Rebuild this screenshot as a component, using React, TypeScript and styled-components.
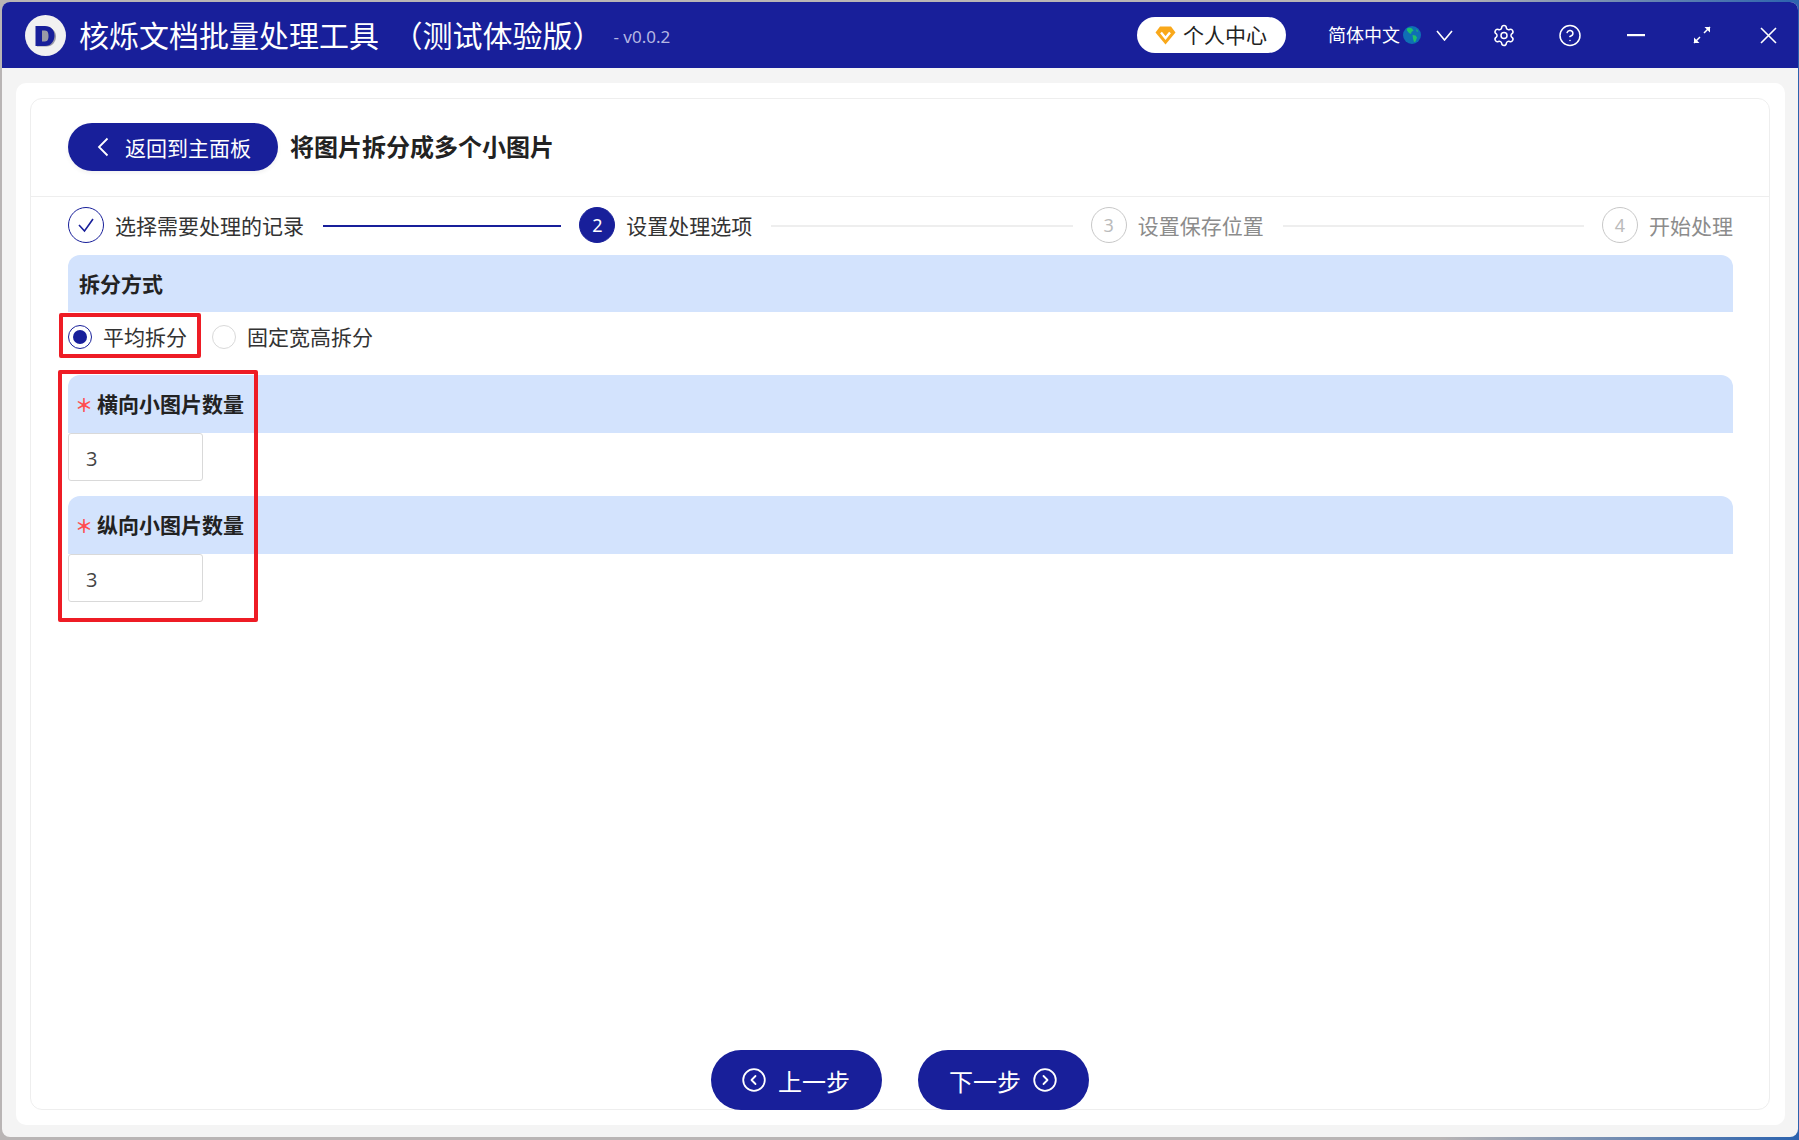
import React from "react";
import styled, { createGlobalStyle } from "styled-components";
import { Settings, CircleHelp } from "lucide-react";

const NAVY = "#181f9a";
const BAND = "#d3e3fd";
const RED = "#ee1c25";
const FONT = `"Noto Sans CJK SC", "Noto Sans", sans-serif`;

const Global = createGlobalStyle`
  html, body { margin: 0; padding: 0; height: 100%; overflow: hidden; }
  body {
    font-family: ${FONT};
    background: linear-gradient(90deg, #b9b5b5 0%, #b9b5b5 80%, #2c63ae 100%);
  }
  * { box-sizing: border-box; }
`;

const Window = styled.div`
  margin: 2px 1px 0 2px;
  height: 1135px;
  display: flex;
  flex-direction: column;
  background: #f4f4f4;
  border-radius: 8px;
  overflow: hidden;
`;

const Header = styled.header`
  height: 66px;
  flex: none;
  display: flex;
  align-items: center;
  background: ${NAVY};
  color: #fff;
  padding-left: 23px;
`;

const Logo = styled.svg`
  width: 41px;
  height: 41px;
  flex: none;
`;

const AppName = styled.div`
  margin-left: 13px;
  margin-top: -2px;
  font-size: 30px;
  line-height: 40px;
  white-space: pre;
`;

const Version = styled.div`
  margin-left: 11px;
  font-size: 17px;
  color: #b4b6e2;
  font-family: "Noto Sans", sans-serif;
  margin-top: 2px;
`;

const HeaderRight = styled.div`
  margin-left: auto;
  display: flex;
  align-items: center;
  height: 100%;
`;

const ProfilePill = styled.div`
  width: 149px;
  height: 36px;
  border-radius: 18px;
  background: #fff;
  color: #222;
  display: flex;
  align-items: center;
  padding: 0 0 3px 18px;
  font-size: 21px;
  gap: 7px;
`;

const Gem = styled.svg`
  margin-top: 3px;
  flex: none;
`;

const Lang = styled.div`
  margin-left: 42px;
  display: flex;
  align-items: center;
  font-size: 18px;
  padding-bottom: 3px;
`;

const Globe = styled.svg`
  margin: 3px 0 0 3px;
`;

const Chevron = styled.svg`
  margin: 3px 0 0 15px;
  width: 17px;
  height: 11px;
`;

const WindowIcons = styled.div`
  margin-left: 39px;
  padding-right: 18px;
  display: flex;
  align-items: center;
  gap: 42px;
`;

const IconSlot = styled.div`
  width: 24px;
  display: flex;
  align-items: center;
  justify-content: center;
  color: #fff;
`;

const Main = styled.main`
  flex: 1;
  padding: 15px 13px 12px 14px;
  display: flex;
  min-height: 0;
`;

const Panel = styled.div`
  flex: 1;
  background: #fff;
  border-radius: 10px;
  padding: 15px 15px 15px 14px;
  display: flex;
`;

const Card = styled.div`
  flex: 1;
  border: 1px solid #eeeeee;
  border-radius: 12px;
  display: flex;
  flex-direction: column;
`;

const TopBar = styled.div`
  height: 98px;
  flex: none;
  display: flex;
  align-items: center;
  padding: 0 37px 1px;
  border-bottom: 1px solid #eeeeee;
  gap: 12px;
`;

const BackButton = styled.button`
  width: 210px;
  height: 48px;
  border: 0;
  border-radius: 24px;
  background: ${NAVY};
  color: #fff;
  font-family: ${FONT};
  font-size: 21px;
  display: flex;
  align-items: center;
  padding: 0 0 0 29px;
  gap: 16px;
  box-shadow: 0 2px 4px rgba(0, 0, 0, 0.06);
`;

const PageTitle = styled.h1`
  margin: -3px 0 0;
  font-size: 24px;
  font-weight: 700;
  color: #222;
`;

const Content = styled.div`
  flex: 1;
  padding: 10px 36px 0 37px;
  display: flex;
  flex-direction: column;
  position: relative;
`;

const Steps = styled.div`
  display: flex;
  height: 36px;
  gap: 18px;
  margin-bottom: 12px;
`;

const Step = styled.div<{ $last?: boolean }>`
  flex: ${(p) => (p.$last ? "none" : "1")};
  display: flex;
  align-items: center;
  gap: 11px;
  min-width: 0;
`;

const StepCircle = styled.div<{ $state: "done" | "active" | "todo" }>`
  width: 36px;
  height: 36px;
  border-radius: 50%;
  flex: none;
  display: flex;
  align-items: center;
  justify-content: center;
  font-family: "Noto Sans", sans-serif;
  font-size: 18px;
  border: 1px solid ${(p) => (p.$state === "todo" ? "#c8c8c8" : NAVY)};
  background: ${(p) => (p.$state === "active" ? NAVY : "#fff")};
  color: ${(p) => (p.$state === "active" ? "#fff" : p.$state === "done" ? NAVY : "#bbbbbb")};
`;

const StepLabel = styled.span<{ $muted?: boolean }>`
  font-size: 21px;
  white-space: nowrap;
  color: ${(p) => (p.$muted ? "#8c8c8c" : "#333")};
`;

const StepLine = styled.div<{ $done?: boolean }>`
  flex: 1;
  height: 2px;
  margin: 2px 0 0 8px;
  background: ${(p) => (p.$done ? NAVY : "#eeeeee")};
`;

const Band = styled.div<{ $h: number }>`
  height: ${(p) => p.$h}px;
  flex: none;
  background: ${BAND};
  border-radius: 12px 12px 0 0;
  display: flex;
  align-items: center;
  padding: 0 0 2px 11px;
  font-size: 21px;
  font-weight: 700;
  color: #222;
`;

const Required = styled.span`
  color: #ff4d4f;
  font-weight: 700;
  font-size: 18px;
  line-height: 18px;
  margin: 2px 4px 0 -4px;
  flex: none;
`;

const RadioRow = styled.div`
  height: 50px;
  margin-bottom: 13px;
  display: flex;
  align-items: center;
`;

const RadioOption = styled.label`
  display: flex;
  align-items: center;
  gap: 11px;
  font-size: 21px;
  color: #333;
  margin-right: 25px;
`;

const RadioText = styled.span`
  margin-top: -2px;
`;

const RadioDot = styled.span<{ $on?: boolean }>`
  width: 24px;
  height: 24px;
  border-radius: 50%;
  border: 1px solid ${(p) => (p.$on ? NAVY : "#d9d9d9")};
  display: flex;
  align-items: center;
  justify-content: center;
  &::after {
    content: "";
    display: ${(p) => (p.$on ? "block" : "none")};
    width: 14px;
    height: 14px;
    border-radius: 50%;
    background: ${NAVY};
  }
`;

const NumberBox = styled.div`
  width: 135px;
  height: 48px;
  border: 1px solid #d9d9d9;
  border-radius: 3px;
  margin-bottom: 15px;
  display: flex;
  align-items: center;
  padding: 2px 0 0 17px;
  font-family: "Open Sans", sans-serif;
  font-size: 20px;
  color: #444;
  flex: none;
`;

const Highlight = styled.div<{ $l: number; $t: number; $w: number; $h: number }>`
  position: absolute;
  left: ${(p) => p.$l}px;
  top: ${(p) => p.$t}px;
  width: ${(p) => p.$w}px;
  height: ${(p) => p.$h}px;
  border: 4px solid ${RED};
  border-radius: 2px;
  pointer-events: none;
`;

const Footer = styled.div`
  margin: auto 0 -1px -2px;
  display: flex;
  justify-content: center;
  gap: 36px;
`;

const PillButton = styled.button`
  width: 171px;
  height: 60px;
  border: 0;
  border-radius: 30px;
  background: ${NAVY};
  color: #fff;
  font-family: ${FONT};
  font-size: 24px;
  display: flex;
  align-items: center;
  justify-content: center;
  gap: 12px;
  padding: 0;
`;

const CircleArrow = ({ dir }: { dir: "left" | "right" }) => (
  <svg width="24" height="24" viewBox="0 0 24 24" fill="none" stroke="#fff" strokeWidth="1.8" strokeLinecap="round" strokeLinejoin="round">
    <circle cx="12" cy="12" r="10.8" />
    <path d={dir === "left" ? "M13.5 8 9.5 12l4 4" : "M10.5 8l4 4-4 4"} />
  </svg>
);

export default function App() {
  return (
    <>
      <Global />
      <Window>
        <Header>
          <Logo viewBox="0 0 41 41">
            <circle cx="20.5" cy="20.5" r="20.5" fill="#f1f1f1" />
            <path d="M12 12.5h9.5c6 0 9.5 4 9.5 9s-3.5 10-9.5 10H12z" fill="#9a9aa6" />
            <path fillRule="evenodd" d="M10.5 11h9.5c6 0 9.5 4 9.5 9.5S26 31 20 31h-9.5zM17 15.5v11h3c3 0 3.5-3 3.5-5.5s-.5-5.5-3.5-5.5z" fill={NAVY} />
          </Logo>
          <AppName>{"核烁文档批量处理工具  （测试体验版）"}</AppName>
          <Version>- v0.0.2</Version>
          <HeaderRight>
            <ProfilePill>
              <Gem width="21" height="19" viewBox="0 0 21 19">
                <path d="M5 0.5h11l4.5 6L10.5 18.5.5 6.5z" fill="#f9a81a" />
                <path d="M6 6.5l4.5 5.5L15 6.5" fill="none" stroke="#fff" strokeWidth="2.4" />
              </Gem>
              个人中心
            </ProfilePill>
            <Lang>
              简体中文
              <Globe width="18" height="18" viewBox="0 0 18 18">
                <circle cx="9" cy="9" r="9" fill="#0f6fb5" />
                <path d="M4 2.5c2-1 4-1 5 0l1.5 2-2 1.5-.5 2-2-1-2-2.5zM9.5 9l3 .5 1.5 2-1.5 4-1.5.5-1-3.5zM13 3l2 2-1 1z" fill="#1fc16b" />
              </Globe>
              <Chevron viewBox="0 0 17 11" fill="none" stroke="#fff" strokeWidth="1.6">
                <path d="M1 1l7.5 9L16 1" />
              </Chevron>
            </Lang>
            <WindowIcons>
              <IconSlot>
                <Settings size={25} strokeWidth={1.5} />
              </IconSlot>
              <IconSlot>
                <CircleHelp size={25} strokeWidth={1.5} />
              </IconSlot>
              <IconSlot>
                <svg width="18" height="3" viewBox="0 0 18 3">
                  <rect width="18" height="2.2" fill="#fff" />
                </svg>
              </IconSlot>
              <IconSlot>
                <svg width="18" height="18" viewBox="0 0 18 18" fill="none" stroke="#fff" strokeWidth="1.5">
                  <path d="M11 7l6-6M1 17l6-6" />
                  <path d="M11.5 1H17v5.5z M1 11.5V17h5.5z" fill="#fff" stroke="none" />
                </svg>
              </IconSlot>
              <IconSlot>
                <svg width="17" height="17" viewBox="0 0 17 17" fill="none" stroke="#fff" strokeWidth="1.6">
                  <path d="M1 1l15 15M16 1 1 16" />
                </svg>
              </IconSlot>
            </WindowIcons>
          </HeaderRight>
        </Header>
        <Main>
          <Panel>
            <Card>
              <TopBar>
                <BackButton>
                  <svg width="12" height="20" viewBox="0 0 12 20" fill="none" stroke="#fff" strokeWidth="1.8">
                    <path d="M10.5 1.5 2 10l8.5 8.5" />
                  </svg>
                  返回到主面板
                </BackButton>
                <PageTitle>将图片拆分成多个小图片</PageTitle>
              </TopBar>
              <Content>
                <Steps>
                  <Step>
                    <StepCircle $state="done">
                      <svg width="18" height="16" viewBox="0 0 18 16" fill="none" stroke={NAVY} strokeWidth="1.6">
                        <path d="M2 8l5.5 6L16 2" />
                      </svg>
                    </StepCircle>
                    <StepLabel>选择需要处理的记录</StepLabel>
                    <StepLine $done />
                  </Step>
                  <Step>
                    <StepCircle $state="active">2</StepCircle>
                    <StepLabel>设置处理选项</StepLabel>
                    <StepLine />
                  </Step>
                  <Step>
                    <StepCircle $state="todo">3</StepCircle>
                    <StepLabel $muted>设置保存位置</StepLabel>
                    <StepLine />
                  </Step>
                  <Step $last>
                    <StepCircle $state="todo">4</StepCircle>
                    <StepLabel $muted>开始处理</StepLabel>
                  </Step>
                </Steps>
                <Band $h={57}>拆分方式</Band>
                <RadioRow>
                  <RadioOption>
                    <RadioDot $on />
                    <RadioText>平均拆分</RadioText>
                  </RadioOption>
                  <RadioOption>
                    <RadioDot />
                    <RadioText>固定宽高拆分</RadioText>
                  </RadioOption>
                </RadioRow>
                <Band $h={58}>
                  <Required>＊</Required>横向小图片数量
                </Band>
                <NumberBox>3</NumberBox>
                <Band $h={58}>
                  <Required>＊</Required>纵向小图片数量
                </Band>
                <NumberBox>3</NumberBox>
                <Highlight $l={28} $t={116} $w={142} $h={45} />
                <Highlight $l={27} $t={173} $w={200} $h={252} />
                <Footer>
                  <PillButton>
                    <CircleArrow dir="left" />
                    上一步
                  </PillButton>
                  <PillButton>
                    下一步
                    <CircleArrow dir="right" />
                  </PillButton>
                </Footer>
              </Content>
            </Card>
          </Panel>
        </Main>
      </Window>
    </>
  );
}
